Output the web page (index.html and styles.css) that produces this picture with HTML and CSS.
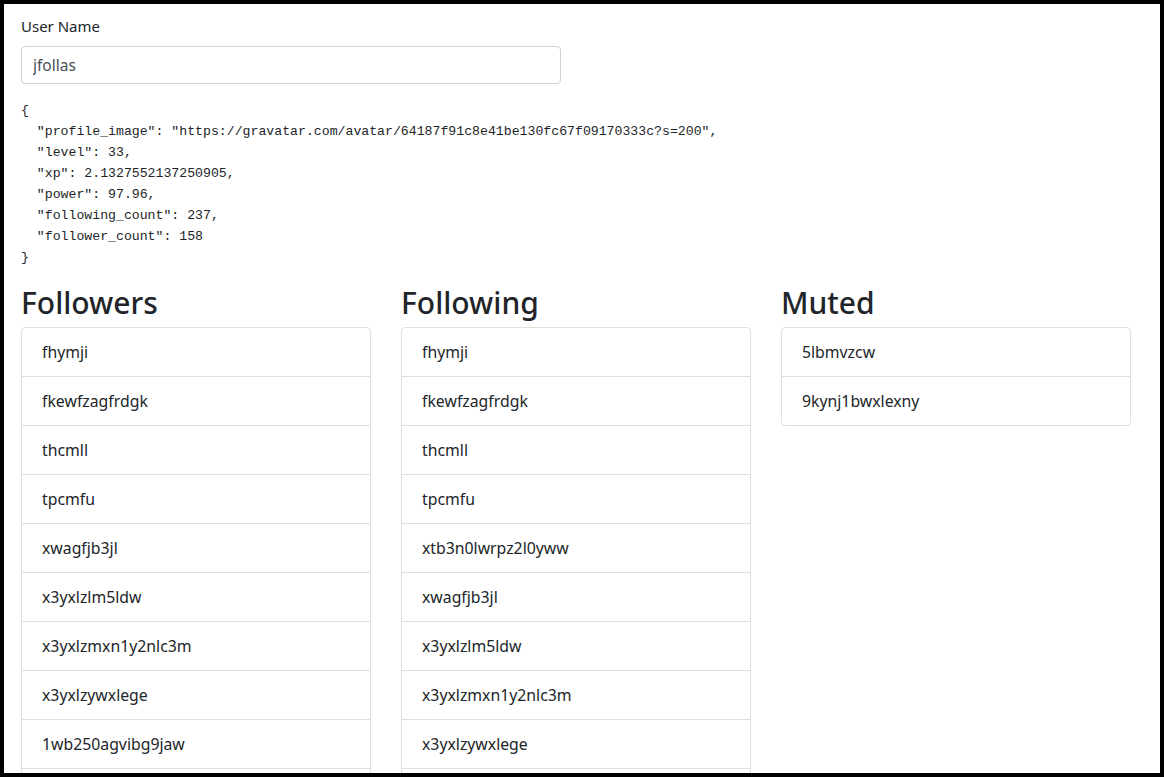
FILE: index.html
```html
<!DOCTYPE html>
<html>
<head>
<meta charset="utf-8">
<link rel="stylesheet" href="styles.css">
</head>
<body>
<div class="frame">
  <div class="container">
    <div class="form-group">
      <label class="label" for="user">User Name</label>
      <input id="user" class="input" type="text" value="jfollas">
    </div>
    <pre class="json">{
  "profile_image": "https://gravatar.com/avatar/64187f91c8e41be130fc67f09170333c?s=200",
  "level": 33,
  "xp": 2.1327552137250905,
  "power": 97.96,
  "following_count": 237,
  "follower_count": 158
}</pre>
    <div class="row">
      <div class="col">
        <h2 class="title">Followers</h2>
        <ul class="list">
          <li class="item">fhymji</li>
          <li class="item">fkewfzagfrdgk</li>
          <li class="item">thcmll</li>
          <li class="item">tpcmfu</li>
          <li class="item">xwagfjb3jl</li>
          <li class="item">x3yxlzlm5ldw</li>
          <li class="item">x3yxlzmxn1y2nlc3m</li>
          <li class="item">x3yxlzywxlege</li>
          <li class="item">1wb250agvibg9jaw</li>
          <li class="item"></li>
        </ul>
      </div>
      <div class="col">
        <h2 class="title">Following</h2>
        <ul class="list">
          <li class="item">fhymji</li>
          <li class="item">fkewfzagfrdgk</li>
          <li class="item">thcmll</li>
          <li class="item">tpcmfu</li>
          <li class="item">xtb3n0lwrpz2l0yww</li>
          <li class="item">xwagfjb3jl</li>
          <li class="item">x3yxlzlm5ldw</li>
          <li class="item">x3yxlzmxn1y2nlc3m</li>
          <li class="item">x3yxlzywxlege</li>
          <li class="item"></li>
        </ul>
      </div>
      <div class="col">
        <h2 class="title">Muted</h2>
        <ul class="list">
          <li class="item">5lbmvzcw</li>
          <li class="item">9kynj1bwxlexny</li>
        </ul>
      </div>
    </div>
  </div>
</div>
</body>
</html>
```
FILE: styles.css
```css
html, body {
  margin: 0;
  padding: 0;
  background: #000;
}
.frame {
  width: 1156px;
  height: 769px;
  border: 4px solid #000;
  background: #fff;
  overflow: hidden;
  font-family: "Noto Sans", "Open Sans", sans-serif;
  font-size: 16px;
  line-height: 24px;
  color: #212529;
}
.container {
  padding: 10px 17px 0 17px;
}
.form-group {
  display: flex;
  flex-direction: column;
  align-items: flex-start;
  margin-bottom: 16px;
}
.label {
  font-size: 15px;
  margin-bottom: 8px;
}
.input {
  box-sizing: border-box;
  width: 540px;
  height: 38px;
  padding: 6px 11px;
  border: 1px solid #ced4da;
  border-radius: 4px;
  font-family: "Noto Sans", "Open Sans", sans-serif;
  font-size: 15.5px;
  color: #495057;
  background: #fff;
  margin: 0;
}
.json {
  margin: 0 0 16px 0;
  font-family: "Liberation Mono", "DejaVu Sans Mono", monospace;
  font-size: 13.2px;
  line-height: 21px;
  color: #212529;
}
.row {
  display: flex;
  gap: 30px;
}
.col {
  width: 350px;
}
.title {
  margin: 0 0 5px 0;
  font-size: 30px;
  font-weight: 500;
  line-height: 38px;
}
.list {
  list-style: none;
  margin: 0;
  padding: 0;
  border: 1px solid rgba(0, 0, 0, 0.125);
  border-radius: 4px;
}
.item {
  height: 24px;
  padding: 12px 20px;
  line-height: 24px;
  border-top: 1px solid rgba(0, 0, 0, 0.125);
  font-size: 15.8px;
}
.item:first-child {
  border-top: none;
}
```
